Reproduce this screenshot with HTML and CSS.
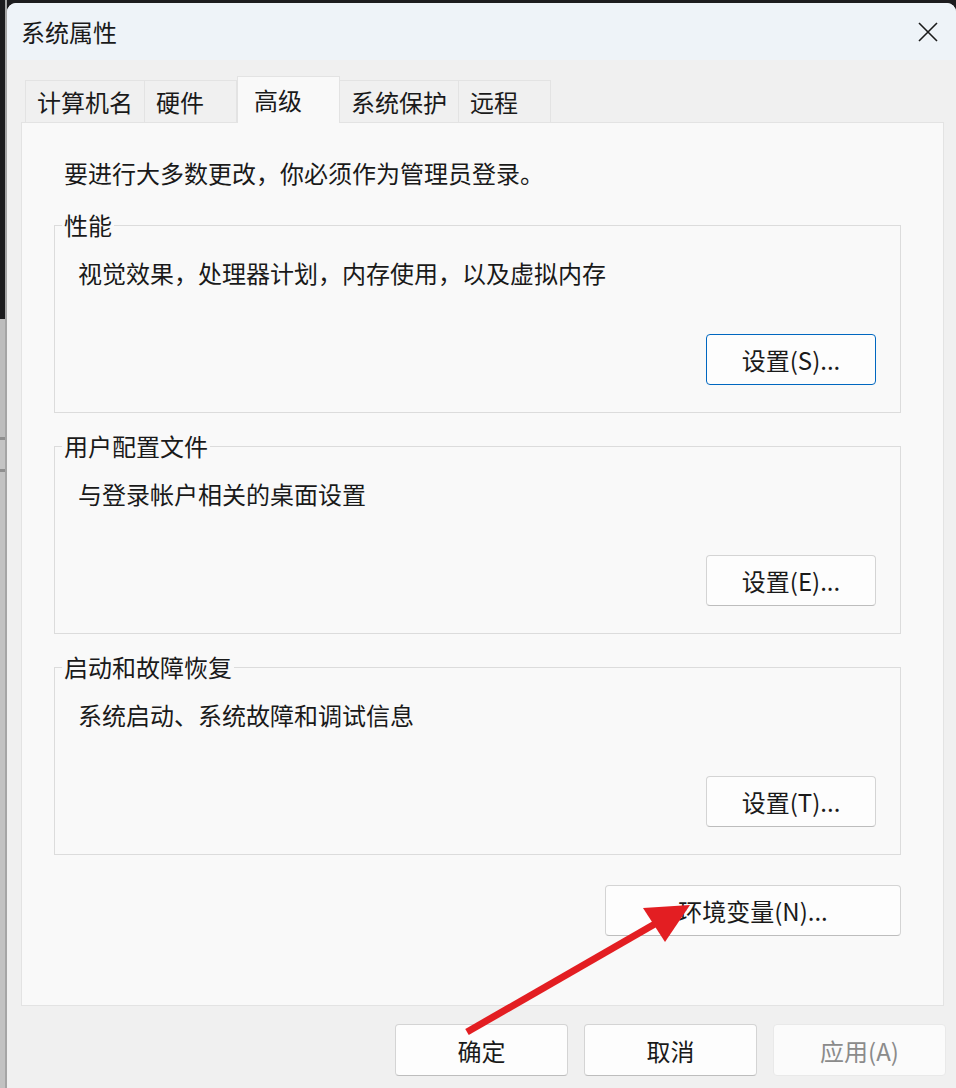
FILE: index.html
```html
<!DOCTYPE html>
<html lang="zh-CN">
<head>
    <meta charset="UTF-8">
    <meta name="viewport" content="width=device-width, initial-scale=1.0">
    <title>系统属性</title>
    <link rel="stylesheet" href="styles.css">
</head>
<body>
    <div class="desk-edge"></div>

    <div class="window">
        <div class="titlebar">
            <span class="title">系统属性</span>
            <button class="close" aria-label="关闭">
                <svg width="20" height="20" viewBox="0 0 20 20">
                    <path d="M1 1 L19 19 M19 1 L1 19" stroke="#1a1a1a" stroke-width="1.6" fill="none"/>
                </svg>
            </button>
        </div>

        <div class="dialog">
            <div class="tabs">
                <div class="tab">计算机名</div>
                <div class="tab">硬件</div>
                <div class="tab active">高级</div>
                <div class="tab">系统保护</div>
                <div class="tab">远程</div>
            </div>

            <div class="panel">
                <p class="intro">要进行大多数更改，你必须作为管理员登录。</p>

                <fieldset class="group">
                    <legend>性能</legend>
                    <p class="group-desc">视觉效果，处理器计划，内存使用，以及虚拟内存</p>
                    <div class="group-actions">
                        <button class="btn default">设置(S)...</button>
                    </div>
                </fieldset>

                <fieldset class="group">
                    <legend>用户配置文件</legend>
                    <p class="group-desc">与登录帐户相关的桌面设置</p>
                    <div class="group-actions">
                        <button class="btn">设置(E)...</button>
                    </div>
                </fieldset>

                <fieldset class="group">
                    <legend>启动和故障恢复</legend>
                    <p class="group-desc">系统启动、系统故障和调试信息</p>
                    <div class="group-actions">
                        <button class="btn">设置(T)...</button>
                    </div>
                </fieldset>

                <div class="env-row">
                    <button class="btn wide">环境变量(N)...</button>
                </div>
            </div>

            <div class="footer">
                <button class="btn footer-btn">确定</button>
                <button class="btn footer-btn">取消</button>
                <button class="btn footer-btn" disabled>应用(A)</button>
            </div>
        </div>
    </div>

    <!-- annotation arrow drawn over the dialog -->
    <svg class="annotation" viewBox="0 0 956 1088" width="956" height="1088">
        <line x1="467" y1="1032" x2="660" y2="921" stroke="#e31e22" stroke-width="7"/>
        <polygon points="690,905 643,908 665,942" fill="#e31e22"/>
    </svg>
</body>
</html>
```

FILE: styles.css
```css
* {
    margin: 0;
    padding: 0;
    box-sizing: border-box;
}

body {
    font-family: "Noto Sans CJK SC", "Noto Sans", sans-serif;
    font-size: 24px;
    color: #1a1a1a;
    background: #1c1c1e;
    display: flex;
    width: 956px;
    height: 1088px;
    overflow: hidden;
    position: relative;
}

.desk-edge {
    width: 7px;
    flex-shrink: 0;
    background: linear-gradient(#1c1c1e 0 319px, #bdbdbd 319px 437px, #8f8f8f 437px 440px, #c4c4c4 440px 469px, #8f8f8f 469px 472px, #c2c2c2 472px);
    border-right: 2px solid #a5a5a5;
}

.window {
    flex: 1;
    margin-top: 3px;
    background: #f0f0f0;
    border-radius: 9px 9px 0 0;
    overflow: hidden;
    display: flex;
    flex-direction: column;
}

.titlebar {
    height: 57px;
    background: #eef3f8;
    display: flex;
    align-items: center;
    justify-content: space-between;
    padding: 0 18px 0 14px;
}

.title {
    font-size: 24px;
    line-height: 32px;
}

.close {
    border: none;
    background: none;
    width: 20px;
    height: 20px;
    display: flex;
}

.dialog {
    flex: 1;
    padding: 16px 12px 0 14px;
}

.tabs {
    display: flex;
    align-items: flex-end;
    height: 46px;
    padding-left: 4px;
    position: relative;
    z-index: 1;
}

.tab {
    height: 42px;
    min-width: 92px;
    padding: 0 11px;
    line-height: 42px;
    border: 1px solid #e3e3e3;
    border-bottom: none;
    background: #f0f0f0;
    white-space: nowrap;
}

.tab + .tab {
    border-left: none;
}

.tab.active {
    height: 47px;
    min-width: 103px;
    padding-left: 16px;
    line-height: 46px;
    background: #f9f9f9;
    border: 1px solid #e3e3e3;
    border-bottom: none;
    margin-bottom: -1px;
}

.tab.active + .tab {
    border-left: none;
}

.panel {
    background: #f9f9f9;
    border: 1px solid #e3e3e3;
    padding: 34px 42px 69px 32px;
}

.intro {
    line-height: 32px;
    margin-left: 10px;
    margin-bottom: 20px;
}

.group {
    border: 1px solid #dcdcdc;
    padding: 0 24px 27px 7px;
    margin-bottom: 17px;
}

.group:last-of-type {
    margin-bottom: 30px;
}

.group legend {
    padding: 0 2px;
    line-height: 32px;
}

.group-desc {
    line-height: 32px;
    margin: 16px 0 0 16px;
}

.group-actions {
    display: flex;
    justify-content: flex-end;
    margin-top: 45px;
}

.btn {
    font-family: "Noto Sans CJK SC", "Noto Sans", sans-serif;
    font-size: 24px;
    color: #1a1a1a;
    width: 170px;
    height: 51px;
    background: #fdfdfd;
    border: 1px solid #d4d4d4;
    border-bottom-color: #bdbdbd;
    border-radius: 4px;
}

.btn.default {
    border: 1px solid #0067c0;
}

.btn.wide {
    width: 296px;
}

.env-row {
    display: flex;
    justify-content: flex-end;
}

.footer {
    display: flex;
    justify-content: flex-end;
    gap: 16px;
    padding-top: 18px;
    margin-right: -2px;
}

.footer-btn {
    width: 173px;
    height: 52px;
}

.btn:disabled {
    color: #8b8b8b;
    background: #fbfbfb;
    border-color: #e9e9e9;
}

.annotation {
    position: absolute;
    top: 0;
    left: 0;
    pointer-events: none;
}
```
